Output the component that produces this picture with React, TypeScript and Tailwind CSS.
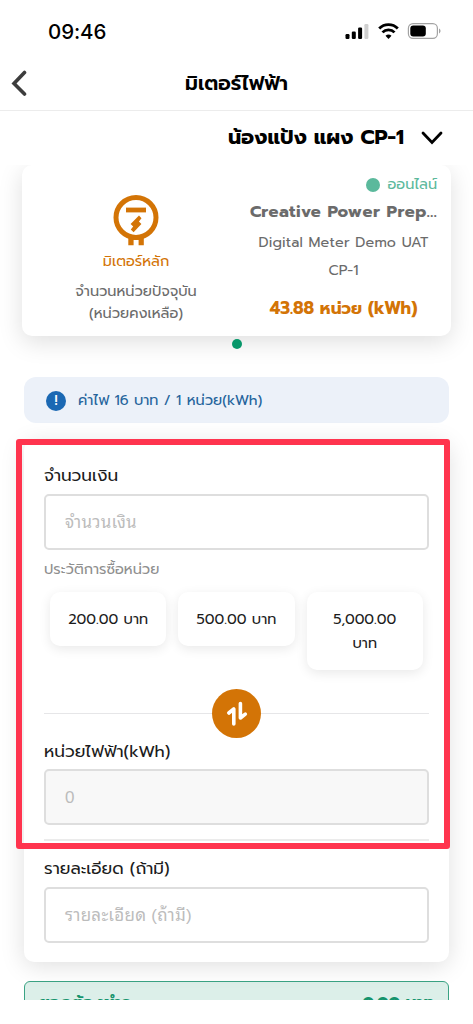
import type { ReactNode } from 'react';

const history = ['200.00 บาท', '500.00 บาท', '5,000.00 บาท'] as const;

function StatusBar() {
  return (
    <div className="flex h-[62px] items-center justify-between pl-12 pr-8">
      <span className="pt-0.5 font-['Inter'] text-[20.5px] font-medium leading-6 tracking-[-0.1px]">09:46</span>
      <svg width="96" height="18" viewBox="0 0 96 18">
        <rect x="0.5" y="12" width="4" height="5" rx="1.2" />
        <rect x="6.8" y="9.5" width="4" height="7.5" rx="1.2" />
        <rect x="13.1" y="5.5" width="4" height="11.5" rx="1.2" />
        <rect x="19.4" y="2" width="4" height="15" rx="1.2" fill="#cfcfcf" />
        <g fill="none" stroke="#000" strokeWidth="2.8">
          <path d="M34.2 6.6a13 13 0 0 1 18.6 0" />
          <path d="M37.5 10.4a8.2 8.2 0 0 1 12 0" />
        </g>
        <path d="M40.5 13.8a4.4 4.4 0 0 1 6 0L43.5 17Z" />
        <rect x="63.4" y="1.6" width="29" height="14.8" rx="4.6" fill="none" stroke="#a3a3a3" strokeWidth="1.2" />
        <rect x="65.3" y="3.5" width="15.5" height="11" rx="3" />
        <path d="M94 6.6v4.8c2-.8 2-4 0-4.8Z" fill="#a3a3a3" />
      </svg>
    </div>
  );
}

function MeterIcon() {
  return (
    <svg width="46" height="52" viewBox="0 0 46 52" fill="none">
      <circle cx="23" cy="22.5" r="20" stroke="#d37406" strokeWidth="5" />
      <path d="M13 12.6h20v4.8H13Z" fill="#d37406" />
      <path d="M26 20.6l2.5 2.7-2.6 3.2 2.5 2.6-7.8 8.2-2.8-2.8 2.4-3-2.6-2.6Z" fill="#d37406" />
      <path d="M15.3 42h15.5v8.2h-5.2v-5.4h-5v5.4h-5.3Z" fill="#d37406" />
    </svg>
  );
}

function MeterCard() {
  return (
    <div className="mx-[22px] flex h-[171px] rounded-[10px] bg-white shadow-[0_6px_24px_rgba(0,0,0,0.13)]">
      <div className="flex w-[228px] flex-col items-center pt-[30px]">
        <MeterIcon />
        <p className="mt-0.5 text-[14.5px] leading-6 text-[#d37406]">มิเตอร์หลัก</p>
        <p className="mt-[7px] text-[14.5px] leading-[22px] text-[#6b6b6b]">จำนวนหน่วยปัจจุบัน</p>
        <p className="text-[14.5px] leading-[22px] text-[#6b6b6b]">(หน่วยคงเหลือ)</p>
      </div>
      <div className="flex w-[187px] flex-col items-center text-[#6b6b6b]">
        <div className="flex h-[34px] items-center gap-2 self-end pt-1.5 text-[14.5px] text-[#5bb99c]">
          <span className="size-3.5 rounded-full bg-[#5bb99c]" />
          ออนไลน์
        </div>
        <p className="whitespace-nowrap text-[16.6px] font-bold leading-[26px] tracking-[0.5px]">Creative Power Prep...</p>
        <p className="mt-[3px] text-[14.3px] leading-7 tracking-[0.2px]">Digital Meter Demo UAT</p>
        <p className="text-[14.3px] leading-7">CP-1</p>
        <p className="mt-2.5 text-[17px] font-bold leading-7 text-[#d37406]">43.88 หน่วย (kWh)</p>
      </div>
    </div>
  );
}

function Box({ children, disabled }: { children: ReactNode; disabled?: boolean }) {
  return (
    <div
      className={`flex h-14 items-center rounded-[5px] border-[2.5px] border-[#dedede] px-[19px] pt-0.5 font-['Liberation_Sans','Noto_Sans_Thai_Looped','Loma','Noto_Serif_Thai',sans-serif] text-[17px] tracking-[0.25px] text-[#bcbcbc] ${disabled ? 'bg-[#f8f8f8]' : 'bg-white'}`}
    >
      {children}
    </div>
  );
}

function Label({ children }: { children: ReactNode }) {
  return <div className="text-[16.9px] leading-6 text-[#1c1c1c]">{children}</div>;
}

function SwapDivider() {
  return (
    <div className="flex h-[50px] items-center">
      <div className="h-px flex-1 bg-[#e6e6e8]" />
      <div className="flex size-[49px] items-center justify-center rounded-full bg-[#d37406]">
        <svg width="24" height="26" viewBox="0 0 24 26" fill="none" stroke="#fff" strokeWidth="3.6" strokeLinecap="round" strokeLinejoin="round">
          <path d="M3.8 13L8.8 9V24" />
          <path d="M15.4 3.5V18L20.3 14.2" />
        </svg>
      </div>
      <div className="h-px flex-1 bg-[#e6e6e8]" />
    </div>
  );
}

function PaymentForm() {
  return (
    <div className="relative mx-6 mt-[17px] h-[522px] rounded-[10px] bg-white px-5 pt-6 shadow-[0_4px_24px_rgba(0,0,0,0.13)]">
      <Label>จำนวนเงิน</Label>
      <div className="mt-1.5">
        <Box>จำนวนเงิน</Box>
      </div>
      <p className="mt-[7px] text-[14.5px] leading-6 text-[#8f8f8f]">ประวัติการซื้อหน่วย</p>
      <div className="mt-[11px] flex h-[96px] items-start gap-3 px-1.5">
        {history.map((amount) => (
          <div
            key={amount}
            className="flex-1 rounded-[10px] bg-white px-4 py-[15px] text-center text-[14.5px] leading-6 text-[#1c1c1c] shadow-[0_3px_12px_rgba(0,0,0,0.09)]"
          >
            {amount}
          </div>
        ))}
      </div>
      <SwapDivider />
      <div className="mt-0.5">
        <Label>หน่วยไฟฟ้า(kWh)</Label>
      </div>
      <div className="mt-[5px]">
        <Box disabled>0</Box>
      </div>
      <div className="mt-3.5 h-0.5 bg-[#ebebeb]" />
      <div className="mt-4">
        <Label>รายละเอียด (ถ้ามี)</Label>
      </div>
      <div className="mt-1.5">
        <Box>รายละเอียด (ถ้ามี)</Box>
      </div>
      {/* highlight frame around the amount section */}
      <div className="pointer-events-none absolute -left-2 -top-px h-[410px] w-[434px] rounded-[3px] border-[6px] border-[#ff344e]" />
    </div>
  );
}

export default function App() {
  return (
    <div className="h-[1024px] w-[473px] overflow-hidden bg-white font-['Prompt','Noto_Sans_Thai','Noto_Sans',sans-serif] text-black">
      <StatusBar />
      <header className="flex h-[49px] items-center border-b border-[#ececec] pb-1">
        <svg width="36" height="28" viewBox="0 0 36 28" fill="none" stroke="#3d3d3d" strokeWidth="3.6" strokeLinecap="round">
          <path d="M24.5 2.5L14 13.5L24.5 24" />
        </svg>
        <h1 className="flex-1 pr-9 text-center text-[20.3px] font-semibold leading-7">มิเตอร์ไฟฟ้า</h1>
      </header>
      <div className="flex h-[54px] items-center justify-end gap-4 pr-[29px]">
        <span className="text-[20.6px] font-bold leading-7">น้องแป้ง แผง CP-1</span>
        <svg width="24" height="16" viewBox="0 0 24 16" fill="none" stroke="#000" strokeWidth="2.8" strokeLinecap="round">
          <path d="M3 3L12 12.5L21 3" />
        </svg>
      </div>
      <main className="h-[835px] overflow-hidden">
        <MeterCard />
        <div className="mx-auto mt-[3px] size-2.5 rounded-full bg-[#07976a]" />
        <div className="mx-6 mt-7 flex h-[46px] items-center rounded-xl bg-[#ecf1f9] px-[22px] pt-px text-[14.5px] text-[#25649c]">
          <span className="mr-3 flex size-5 items-center justify-center rounded-full bg-[#1b68b3] text-sm font-medium text-white">!</span>
          ค่าไฟ 16 บาท / 1 หน่วย(kWh)
        </div>
        <PaymentForm />
        <div className="mx-6 mt-[19px] flex h-12 justify-between rounded-[6px] border-[1.5px] border-[#3aa384] bg-[#dcefe9] px-3.5 pt-[9px] text-[16.6px] font-bold leading-6 text-[#16946d]">
          <span>ยอดต้องชำระ</span>
          <span>0.00 บาท</span>
        </div>
      </main>
    </div>
  );
}
